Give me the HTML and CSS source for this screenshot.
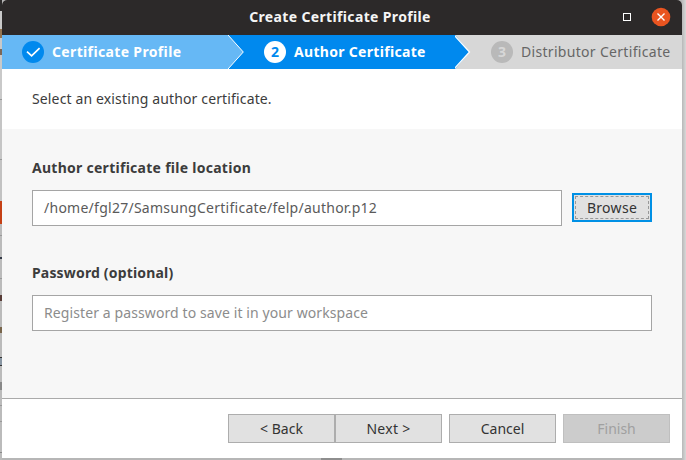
FILE: index.html
```html
<!DOCTYPE html>
<html lang="en">
<head>
<meta charset="utf-8">
<title>Create Certificate Profile</title>
<link rel="stylesheet" href="styles.css">
</head>
<body>
<main class="dialog">
  <header class="titlebar">
    <h1><span class="t-title">Create Certificate Profile</span></h1>
    <span class="maximize"></span>
    <svg class="close" width="20" height="20" viewBox="0 0 20 20"><circle cx="10" cy="10" r="9.3" fill="#e95420"/><path d="M6.5 6.5l7 7M13.5 6.5l-7 7" stroke="#fff" stroke-width="1.4"/></svg>
  </header>
  <nav class="steps">
    <div class="step done">
      <svg width="22" height="22" viewBox="0 0 22 22"><circle cx="11" cy="11" r="11" fill="#0089ee"/><path d="M5 10.7l4.6 4.2 8-7.7" fill="none" stroke="#fff" stroke-width="1.7"/></svg>
      <span class="t-step1">Certificate Profile</span>
    </div>
    <svg class="chevron" width="16" height="34" viewBox="0 0 16 34"><path fill="#0089ee" d="M0 0h16v34H0z"/><path d="M-1 -1L0 0 15.3 17 0 34z" fill="#66b8f5"/><path d="M0 0L15.3 17 0 34" fill="none" stroke="#fff"/></svg>
    <div class="step active">
      <span class="num">2</span>
      <span class="t-step2">Author Certificate</span>
    </div>
    <svg class="chevron" width="16" height="34" viewBox="0 0 16 34"><path fill="#d7d7d7" d="M0 0h16v34H0z"/><path d="M-1 0H0L14.5 17 0 34h-1z" fill="#0089ee"/><path d="M-1 0L14.5 17 -1 34" fill="none" stroke="#fff" stroke-width="1.3"/></svg>
    <div class="step pending">
      <span class="num">3</span>
      <span class="t-step3">Distributor Certificate</span>
    </div>
  </nav>
  <p class="intro"><span class="t-intro">Select an existing author certificate.</span></p>
  <section class="form">
    <div class="label"><span class="t-label1">Author certificate file location</span></div>
    <div class="file-row">
      <div class="field"><span class="t-path">/home/fgl27/SamsungCertificate/felp/author.p12</span></div>
      <button class="browse"><span class="t-browse">Browse</span></button>
    </div>
    <div class="label second"><span class="t-label2">Password (optional)</span></div>
    <div class="field placeholder"><span class="t-hint">Register a password to save it in your workspace</span></div>
  </section>
  <footer class="actions">
    <button>&lt; Back</button><button><span class="t-next">Next &gt;</span></button>
    <button class="apart">Cancel</button>
    <button class="apart" disabled>Finish</button>
  </footer>
</main>
</body>
</html>
```
FILE: styles.css
```css
* { box-sizing: border-box; }
html, body { height: 460px; overflow: hidden; }
body {
  margin: 0;
  padding: 0 4px 2px 2px;
  font: 14px/20px "Noto Sans", sans-serif;
  color: #3c3c3c;
  background:
    linear-gradient(#8e8e8e, #8e8e8e) 321px 458px / 21px 2px no-repeat,
    linear-gradient(90deg, #b8b8b8, #d8d8d8) 682px 0 / 4px 460px no-repeat,
    linear-gradient(#2b2929 11px, #c9c9c9 11px 29px, #947551 29px 38px, #c9c9c9 38px 49px, #7b6656 49px 55px, #c9c9c9 55px 99px, #999 99px 100px, #c5c5c5 100px 159px, #999 159px 160px, #c2c2c2 160px 201px, #c54015 201px 224px, #bbb 224px 235px, #999 235px 236px, #bbb 236px 257px, #333947 257px 259px, #bbb 259px 278px, #999 278px 279px, #bbb 279px 295px, #583c37 295px 301px, #bbb 301px 327px, #78654b 327px 333px, #bbb 333px 357px, #333 357px 358px, #8996a3 358px 365px, #333 365px 366px, #bbb 366px 382px, #888 382px 390px, #bbb 390px 405px, #999 405px 406px, #bbb 406px 421px, #999 421px 422px, #bbb 422px 452px, #888 452px 453px, #bbb 453px) 0 0 / 2px 460px no-repeat,
    #b6b6b6;
}
.dialog { height: 458px; display: flex; flex-direction: column; background: #fff; border-radius: 5px 5px 0 0; overflow: hidden; }
.titlebar { height: 35px; flex: none; display: flex; align-items: center; padding: 0 11px 1px 0; background: #2c2929; }
h1 { flex: 1; margin: 0; padding-left: 55px; text-align: center; font-size: 14px; line-height: 20px; color: #f5f5f5; }
.maximize { width: 8px; height: 8px; border: 1px solid #fff; margin-right: 20px; }
.close { flex: none; }
.steps { height: 34px; flex: none; display: flex; font-weight: 700; color: #fff; }
.step { display: flex; align-items: center; gap: 8px; white-space: nowrap; }
.step svg, .chevron { display: block; flex: none; }
.done { width: 226px; padding-left: 20px; background: #66b8f5; }
.active { width: 211px; padding-left: 20px; background: #0089ee; }
.pending { flex: 1; padding-left: 20px; background: #d7d7d7; color: #666; font-weight: 400; }
.num { width: 22px; height: 22px; flex: none; border-radius: 50%; background: #fff; color: #0089ee; text-align: center; line-height: 22px; font-weight: 700; }
.pending .num { background: #b9b9b9; color: #d7d7d7; }
.intro { height: 60px; flex: none; margin: 0; padding: 20px 30px; white-space: nowrap; }
.form { height: 270px; flex: none; padding: 29px 30px 0; background: #f7f7f7; border-bottom: 1px solid #aaa; }
.label { height: 20px; margin-bottom: 12px; font-weight: 700; white-space: nowrap; }
.second { margin-top: 37px; margin-bottom: 12px; }
.file-row { display: flex; align-items: center; gap: 10px; }
.field { flex: 1; height: 36px; border: 1px solid #a5a5a5; background: #fff; padding: 7px 11px; color: #5a5a5a; white-space: nowrap; }
.placeholder { color: #8c8c8c; }
button { width: 107px; height: 29px; padding: 0; margin: 0; border: 1px solid #adadad; border-radius: 0; background: #e1e1e1; font: inherit; line-height: 20px; color: #333; white-space: nowrap; }
.browse { width: 80px; border: 2px solid #0090e5; outline: 1px dashed #999; outline-offset: -4px; margin-bottom: 1px; }
.actions { height: 59px; display: flex; padding: 15px 12px 0; justify-content: flex-end; }
.apart { margin-left: 7px; }
button:disabled { background: #ccc; border-color: #bfbfbf; color: #a0a0a0; }
.t-title, .t-step1 { letter-spacing: .35px; }
.t-step2, .t-step3 { letter-spacing: .31px; }
.t-intro { letter-spacing: .14px; }
.t-label1 { letter-spacing: .27px; }
.t-path { letter-spacing: .26px; }
.t-label2 { letter-spacing: .17px; }
.t-hint { letter-spacing: .1px; }
.t-browse, .t-next { letter-spacing: .3px; }
```
